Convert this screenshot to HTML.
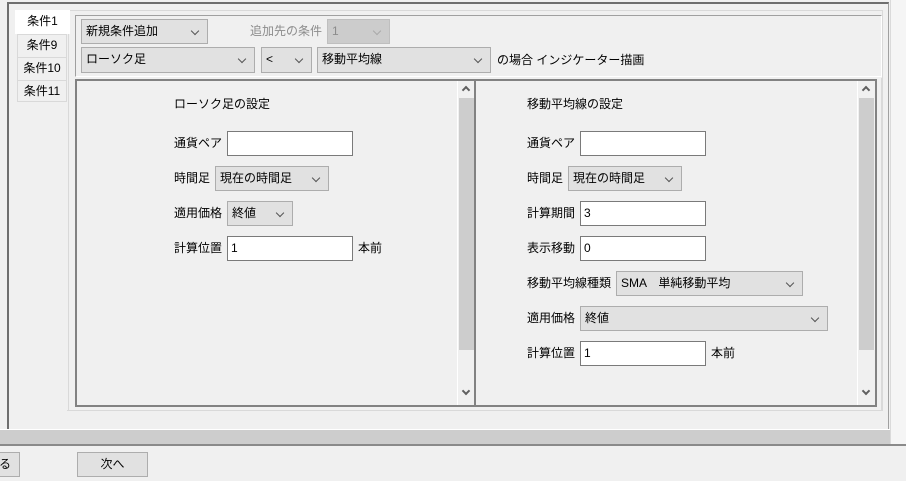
<!DOCTYPE html>
<html><head><meta charset="utf-8"><style>
*{box-sizing:border-box;margin:0;padding:0}
body{width:906px;height:481px;background:#f0f0f0;position:relative;overflow:hidden;font-family:"Liberation Sans","Noto Sans CJK JP",sans-serif;font-size:12px;color:#000}
.a{position:absolute}
.t{position:absolute;line-height:14px;white-space:nowrap}
.in{position:absolute;background:#fff;border:1px solid #7a7a7a;padding:3px 0 0 3px;line-height:16px}
.cb{position:absolute;background:#e1e1e1;border:1px solid #adadad;padding:3px 0 0 4px;line-height:16px}
.cb:after{content:"";position:absolute;right:9px;top:8px;width:5px;height:5px;border-right:1px solid #555;border-bottom:1px solid #555;transform:rotate(45deg)}
.dis{background:#cccccc;border-color:#bfbfbf;color:#8c8c8c}
.dis:after{border-color:#aaa}
.tab{position:absolute;border:1px solid #d9d9d9;background:#f0f0f0;text-align:center;line-height:20px}
.sb{position:absolute;width:17px;background:#f0f0f0;border-left:1px solid #fff}
.th{position:absolute;left:1px;width:15px;background:#cdcdcd}
.up,.dn{position:absolute;left:5px;width:6px;height:6px;border-left:2px solid #606060;border-top:2px solid #606060}
.up{top:6px;transform:rotate(45deg)}
.dn{top:307px;transform:rotate(225deg)}
</style></head><body>
<div class="a" style="left:7px;top:2px;width:882px;height:428px;border-left:2px solid #6e6e6e;border-top:2px solid #6e6e6e;border-right:1px solid #a0a0a0"></div>
<div class="a" style="left:890px;top:0;width:16px;height:445px;background:#f5f5f5;border-left:1px solid #dadada"></div>
<div class="a" style="left:68px;top:10px;width:815px;height:401px;border:1px solid #d9d9d9;background:#f0f0f0"></div>
<div class="tab" style="left:17px;top:34px;width:50px;height:24px">条件9</div>
<div class="tab" style="left:17px;top:57px;width:50px;height:24px">条件10</div>
<div class="tab" style="left:17px;top:80px;width:50px;height:22px">条件11</div>
<div class="tab" style="left:15px;top:10px;width:55px;height:24px;background:#fff;border-color:#fff;border-bottom:none">条件1</div>
<div class="a" style="left:75px;top:15px;width:807px;height:62px;border-top:1px solid #a0a0a0;border-left:1px solid #a0a0a0;border-right:1px solid #fff;border-bottom:1px solid #fff"></div>
<div class="cb" style="left:81px;top:19px;width:127px;height:25px">新規条件追加</div>
<div class="t" style="left:250px;top:24px;color:#8c8c8c">追加先の条件</div>
<div class="cb dis" style="left:327px;top:19px;width:63px;height:25px">1</div>
<div class="cb" style="left:81px;top:47px;width:174px;height:26px">ローソク足</div>
<div class="cb" style="left:261px;top:47px;width:51px;height:26px">&lt;</div>
<div class="cb" style="left:317px;top:47px;width:174px;height:26px">移動平均線</div>
<div class="t" style="left:497px;top:53px">の場合 インジケーター描画</div>
<div class="a" style="left:67px;top:78px;width:815px;height:333px;border-bottom:1px solid #d9d9d9;border-right:1px solid #d9d9d9"></div>
<div class="a" style="left:75px;top:79px;width:401px;height:328px;border:2px solid #828282;border-right:none"></div>
<div class="a" style="left:474px;top:79px;width:2px;height:328px;background:#828282"></div>
<div class="sb" style="left:457px;top:81px;height:324px"><div class="up"></div><div class="th" style="top:17px;height:252px"></div><div class="dn"></div></div>
<div class="t" style="left:174px;top:97px">ローソク足の設定</div>
<div class="t" style="left:174px;top:136px">通貨ペア</div><div class="in" style="left:227px;top:131px;width:126px;height:25px"></div>
<div class="t" style="left:174px;top:171px">時間足</div><div class="cb" style="left:215px;top:166px;width:114px;height:25px">現在の時間足</div>
<div class="t" style="left:174px;top:206px">適用価格</div><div class="cb" style="left:227px;top:201px;width:66px;height:25px">終値</div>
<div class="t" style="left:174px;top:241px">計算位置</div><div class="in" style="left:227px;top:236px;width:126px;height:25px">1</div><div class="t" style="left:358px;top:241px">本前</div>
<div class="a" style="left:476px;top:79px;width:401px;height:328px;border:2px solid #828282;border-left:none"></div>
<div class="sb" style="left:857px;top:81px;height:324px"><div class="up"></div><div class="th" style="top:17px;height:252px"></div><div class="dn"></div></div>
<div class="t" style="left:527px;top:97px">移動平均線の設定</div>
<div class="t" style="left:527px;top:136px">通貨ペア</div><div class="in" style="left:580px;top:131px;width:126px;height:25px"></div>
<div class="t" style="left:527px;top:171px">時間足</div><div class="cb" style="left:568px;top:166px;width:114px;height:25px">現在の時間足</div>
<div class="t" style="left:527px;top:206px">計算期間</div><div class="in" style="left:580px;top:201px;width:126px;height:25px">3</div>
<div class="t" style="left:527px;top:241px">表示移動</div><div class="in" style="left:580px;top:236px;width:126px;height:25px">0</div>
<div class="t" style="left:527px;top:276px">移動平均線種類</div><div class="cb" style="left:616px;top:271px;width:187px;height:25px">SMA　単純移動平均</div>
<div class="t" style="left:527px;top:311px">適用価格</div><div class="cb" style="left:580px;top:306px;width:248px;height:25px">終値</div>
<div class="t" style="left:527px;top:346px">計算位置</div><div class="in" style="left:580px;top:341px;width:126px;height:25px">1</div><div class="t" style="left:711px;top:346px">本前</div>
<div class="a" style="left:0;top:429px;width:890px;height:15px;background:#cdcdcd;border-top:1px solid #fff"></div>
<div class="a" style="left:0;top:444px;width:906px;height:2px;background:#8a8a8a"></div>
<div class="a" style="left:-30px;top:452px;width:50px;height:25px;background:#e1e1e1;border:1px solid #adadad;text-align:right;padding-right:8px;line-height:23px">る</div>
<div class="a" style="left:77px;top:452px;width:71px;height:25px;background:#e1e1e1;border:1px solid #adadad;text-align:center;line-height:23px">次へ</div>
</body></html>
